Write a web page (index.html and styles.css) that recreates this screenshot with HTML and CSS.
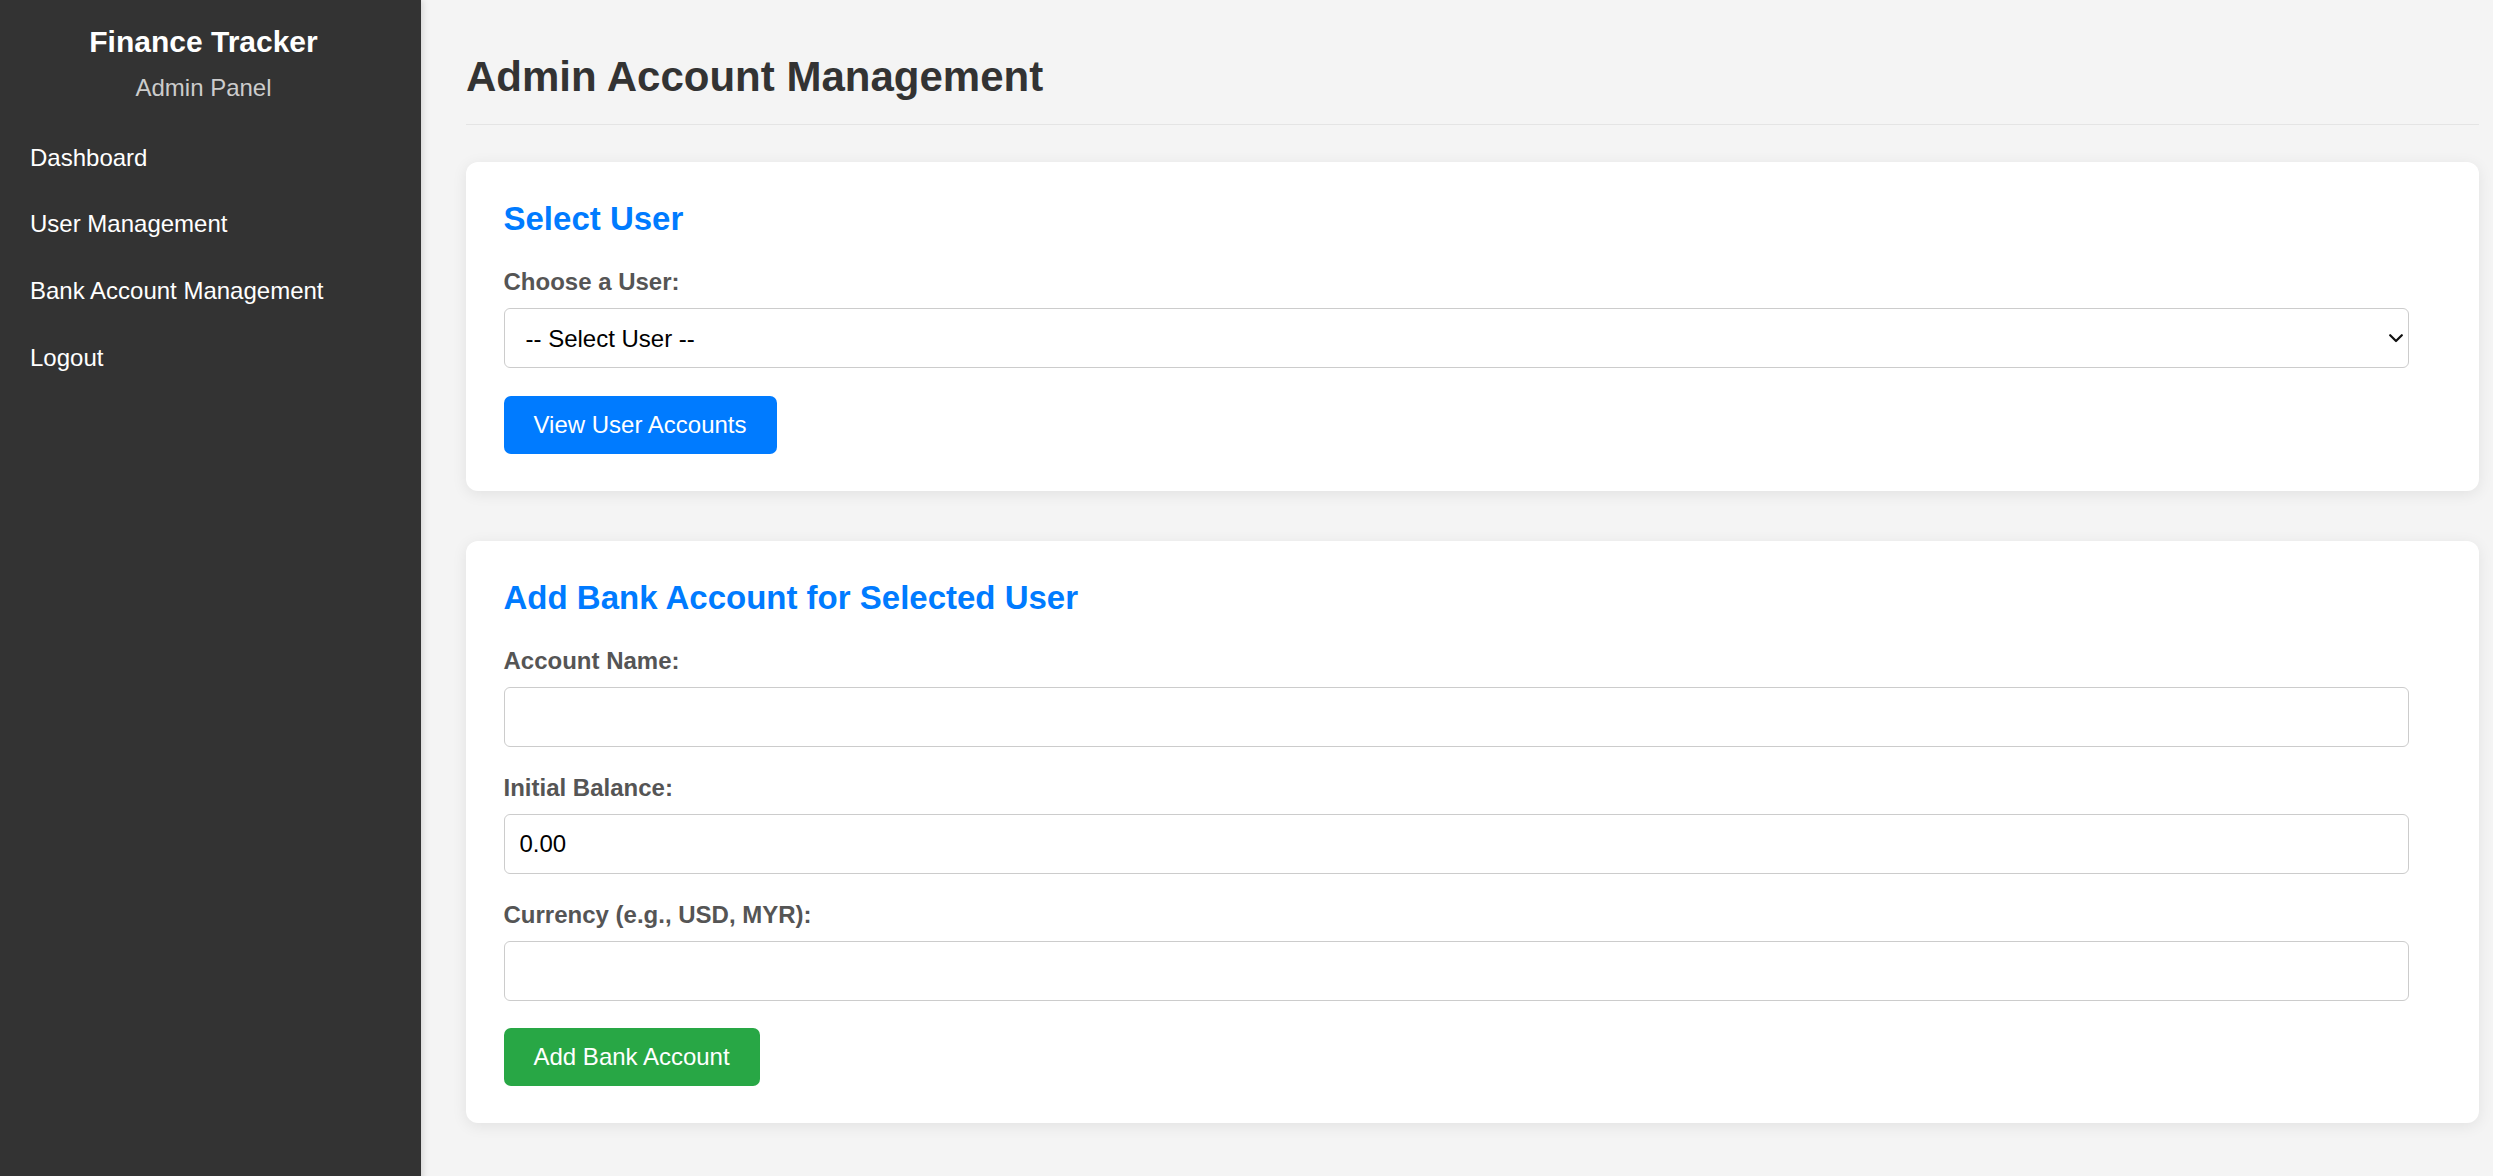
FILE: index.html
```html
<!DOCTYPE html>
<html lang="en">
<head>
<meta charset="utf-8">
<title>Admin Account Management</title>
<link rel="stylesheet" href="styles.css">
</head>
<body>
<aside class="sidebar">
  <div class="brand">
    <div class="brand-title">Finance Tracker</div>
    <div class="brand-sub">Admin Panel</div>
  </div>
  <ul class="nav">
    <li><a href="#">Dashboard</a></li>
    <li><a href="#">User Management</a></li>
    <li><a href="#">Bank Account Management</a></li>
    <li><a href="#">Logout</a></li>
  </ul>
</aside>
<main class="main">
  <h1 class="page-title">Admin Account Management</h1>

  <section class="card">
    <h2 class="card-title">Select User</h2>
    <label class="field-label" for="user">Choose a User:</label>
    <div class="select-wrap">
      <select id="user" class="field select">
        <option>-- Select User --</option>
      </select>
      <svg class="chevron" width="14" height="9" viewBox="0 0 14 9"><polyline points="1.2,1.2 7,7 12.8,1.2" fill="none" stroke="#111" stroke-width="2.2" stroke-linecap="round" stroke-linejoin="round"/></svg>
    </div>
    <button class="btn btn-blue">View User Accounts</button>
  </section>

  <section class="card">
    <h2 class="card-title">Add Bank Account for Selected User</h2>
    <label class="field-label" for="acc">Account Name:</label>
    <input id="acc" class="field" type="text">
    <label class="field-label" for="bal">Initial Balance:</label>
    <input id="bal" class="field" type="text" value="0.00">
    <label class="field-label" for="cur">Currency (e.g., USD, MYR):</label>
    <input id="cur" class="field" type="text">
    <button class="btn btn-green">Add Bank Account</button>
  </section>
</main>
</body>
</html>
```

FILE: styles.css
```css
* { box-sizing: border-box; }

html, body {
  margin: 0;
  padding: 0;
}

body {
  display: flex;
  min-height: 100vh;
  background: #f4f4f4;
  font-family: "Liberation Sans", Arial, sans-serif;
  color: #333;
}

.sidebar {
  width: 421px;
  flex-shrink: 0;
  background: #333333;
  color: #fff;
  padding-top: 23.6px;
  box-shadow: 2px 0 6px rgba(0, 0, 0, 0.12);
  position: relative;
  z-index: 1;
}

.brand {
  text-align: center;
  padding-right: 14px;
}

.brand-title {
  font-size: 30px;
  font-weight: bold;
  line-height: 36px;
  color: #fff;
}

.brand-sub {
  margin-top: 14px;
  font-size: 24px;
  line-height: 28px;
  color: #cccccc;
}

.nav {
  list-style: none;
  margin: 23px 0 0;
  padding: 0;
}

.nav a {
  display: block;
  padding: 20px 30px;
  font-size: 24px;
  line-height: 26.67px;
  color: #ffffff;
  text-decoration: none;
}

.main {
  flex: 1;
  padding: 52px 14px 40px 45px;
}

.page-title {
  margin: 0 0 37px;
  padding-bottom: 22px;
  border-bottom: 1px solid #e4e4e4;
  font-size: 42px;
  line-height: 50px;
  font-weight: bold;
  color: #333;
}

.card {
  background: #fff;
  border-radius: 12px;
  padding: 37.5px;
  box-shadow: 0 3px 15px rgba(0, 0, 0, 0.08);
  margin-bottom: 50px;
}

.card-title {
  margin: 0 0 30px;
  font-size: 33px;
  line-height: 38px;
  font-weight: bold;
  color: #007bff;
}

.field-label {
  display: block;
  margin-bottom: 13px;
  font-size: 24px;
  line-height: 27.6px;
  font-weight: bold;
  color: #555;
}

.field {
  display: block;
  width: calc(100% - 33px);
  height: 60px;
  margin: 0 0 26.5px;
  padding: 0 15px;
  border: 1px solid #cccccc;
  border-radius: 6px;
  background: #fff;
  font-family: "Liberation Sans", Arial, sans-serif;
  font-size: 24px;
  color: #000;
  outline: none;
}

.select-wrap {
  position: relative;
  width: calc(100% - 33px);
}

.select-wrap .field {
  width: 100%;
  margin-bottom: 27.5px;
}

.select {
  appearance: none;
  -webkit-appearance: none;
  padding-left: 21px;
}

.chevron {
  position: absolute;
  right: 6px;
  top: 26px;
  pointer-events: none;
}

.btn {
  display: block;
  border: none;
  border-radius: 7px;
  padding: 0 30px;
  height: 58px;
  font-family: "Liberation Sans", Arial, sans-serif;
  font-size: 24px;
  color: #fff;
  cursor: pointer;
}

.btn-blue { background: #007bff; }
.btn-green { background: #28a745; }
```
